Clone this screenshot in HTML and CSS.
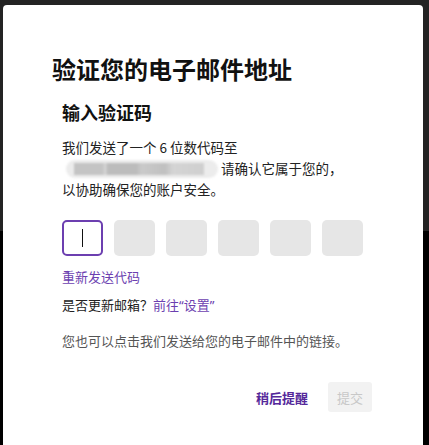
FILE: index.html
```html
<!DOCTYPE html>
<html lang="zh-CN">
<head>
    <meta charset="UTF-8">
    <meta name="viewport" content="width=device-width, initial-scale=1.0">
    <title>验证您的电子邮件地址</title>
    <link rel="stylesheet" href="styles.css">
</head>
<body>
    <div class="modal">
        <h1>验证您的电子邮件地址</h1>
        <div class="section">
            <h2>输入验证码</h2>
            <p class="intro">
                我们发送了一个 6 位数代码至<br>
                <span class="masked"><span class="blocks"></span></span> 请确认它属于您的，<br>
                以协助确保您的账户安全。
            </p>

            <!-- Code boxes -->
            <div class="code">
                <div class="digit active"><span class="caret"></span></div>
                <div class="digit"></div>
                <div class="digit"></div>
                <div class="digit"></div>
                <div class="digit"></div>
                <div class="digit"></div>
            </div>

            <a class="link resend" href="#">重新发送代码</a>
            <p class="update">是否更新邮箱？<a class="link" href="#">前往<span class="q">“</span>设置<span class="q">”</span></a></p>
            <p class="hint">您也可以点击我们发送给您的电子邮件中的链接。</p>
        </div>

        <div class="actions">
            <button class="later" type="button">稍后提醒</button>
            <button class="submit" type="button" disabled>提交</button>
        </div>
    </div>
</body>
</html>
```

FILE: styles.css
```css
body {
    font-family: "Noto Sans CJK SC", "Noto Sans", sans-serif;
    margin: 0;
    padding: 5px 6px 0 3px;
    background: linear-gradient(#232323 0, #232323 231px, #000 231px);
    height: 445px;
    box-sizing: border-box;
    overflow: hidden;
}
.modal {
    background: #ffffff;
    border-radius: 4px;
    padding: 48px 0 0 49px;
    height: 470px;
    box-sizing: border-box;
}
h1 {
    font-size: 24px;
    line-height: 32px;
    font-weight: 700;
    color: #111111;
    margin: 0;
}
.section {
    padding-left: 10px;
}
h2 {
    font-size: 18px;
    line-height: 24px;
    font-weight: 700;
    color: #111111;
    margin: 15px 0 0;
}
p {
    margin: 0;
    font-size: 13px;
    color: #222222;
}
.intro {
    margin-top: 13px;
    font-size: 13.5px;
    line-height: 21px;
}
.masked {
    display: inline-block;
    width: 152px;
    height: 18px;
    margin-left: 4px;
    vertical-align: -4px;
    border-radius: 9px;
    background: #ececec;
    filter: blur(1px);
    padding: 3px 14px 3px 8px;
    box-sizing: border-box;
}
.blocks {
    display: block;
    height: 100%;
    background: linear-gradient(90deg, #c4c4c4 0, #c4c4c4 22%, #d8d8d8 24%, #bcbcbc 26%, #bcbcbc 48%, #cacaca 52%, #c0c0c0 70%, #d4d4d4 76%, #cfcfcf 100%);
}
.code {
    display: flex;
    gap: 11px;
    margin-top: 20px;
}
.digit {
    width: 41px;
    height: 36px;
    box-sizing: border-box;
    border-radius: 5px;
    background: #e6e6e6;
    display: flex;
    align-items: center;
    justify-content: center;
}
.digit.active {
    background: #ffffff;
    border: 2px solid #6c3fb0;
}
.caret {
    width: 1px;
    height: 18px;
    background: #111111;
}
.link {
    color: #6c3fb0;
    text-decoration: none;
    font-size: 13px;
}
.q {
    font-family: "Noto Sans", sans-serif;
}
.resend {
    display: block;
    margin-top: 11px;
    line-height: 20px;
}
.update {
    margin-top: 8px;
    line-height: 20px;
}
.hint {
    margin-top: 16px;
    line-height: 20px;
    color: #555555;
}
.actions {
    display: flex;
    justify-content: flex-end;
    align-items: center;
    gap: 20px;
    margin: 31px 51px 0 0;
}
button {
    font-family: inherit;
    font-size: 13px;
    border: none;
    background: none;
    padding: 0;
}
.later {
    color: #55289a;
    font-weight: 700;
    cursor: pointer;
}
.submit {
    background: #f2f2f2;
    color: #c8c8c8;
    width: 44px;
    height: 30px;
    border-radius: 3px;
}
```
